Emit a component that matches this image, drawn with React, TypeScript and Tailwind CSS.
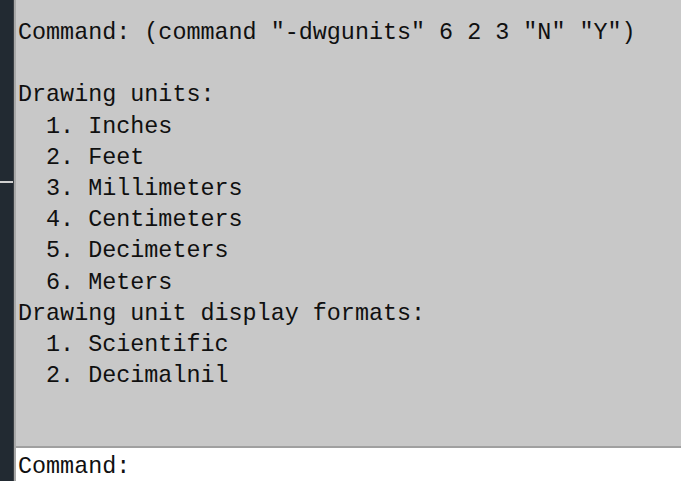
import React from "react";

const lines = [
  'Command: (command "-dwgunits" 6 2 3 "N" "Y")',
  "",
  "Drawing units:",
  "  1. Inches",
  "  2. Feet",
  "  3. Millimeters",
  "  4. Centimeters",
  "  5. Decimeters",
  "  6. Meters",
  "Drawing unit display formats:",
  "  1. Scientific",
  "  2. Decimalnil",
];

const App = () => {
  return (
    <div className="flex h-[481px] w-[681px] overflow-hidden bg-white">
      {/* left dark strip */}
      <div className="relative h-full w-[13px] shrink-0 bg-[#222a32]">
        <div className="absolute left-0 top-[181px] h-[2px] w-[13px] bg-[#d0d0d0]" />
      </div>
      <div className="h-full w-[1px] shrink-0 bg-[#3a3f44]" />
      <div className="h-full w-[2px] shrink-0 bg-[#a8a8a8]" />
      <div className="flex h-full flex-1 flex-col">
        <div
          className="h-[446px] shrink-0 bg-[#c8c8c8] pl-[2px] pt-[18px] text-[23.4px] leading-[31.2px] text-[#101010] whitespace-pre"
          style={{ fontFamily: '"Liberation Mono", "DejaVu Sans Mono", monospace' }}
        >
          {lines.map((l, i) => (
            <div key={i} className="h-[31.2px]">
              {l}
            </div>
          ))}
        </div>
        <div className="h-[2px] shrink-0 bg-[#a0a0a0]" />
        <div
          className="min-h-0 flex-1 bg-white pl-[2px] pt-[4px] text-[23.4px] leading-[31px] text-[#101010]"
          style={{ fontFamily: '"Liberation Mono", "DejaVu Sans Mono", monospace' }}
        >
          Command:
        </div>
      </div>
    </div>
  );
};

export default App;
